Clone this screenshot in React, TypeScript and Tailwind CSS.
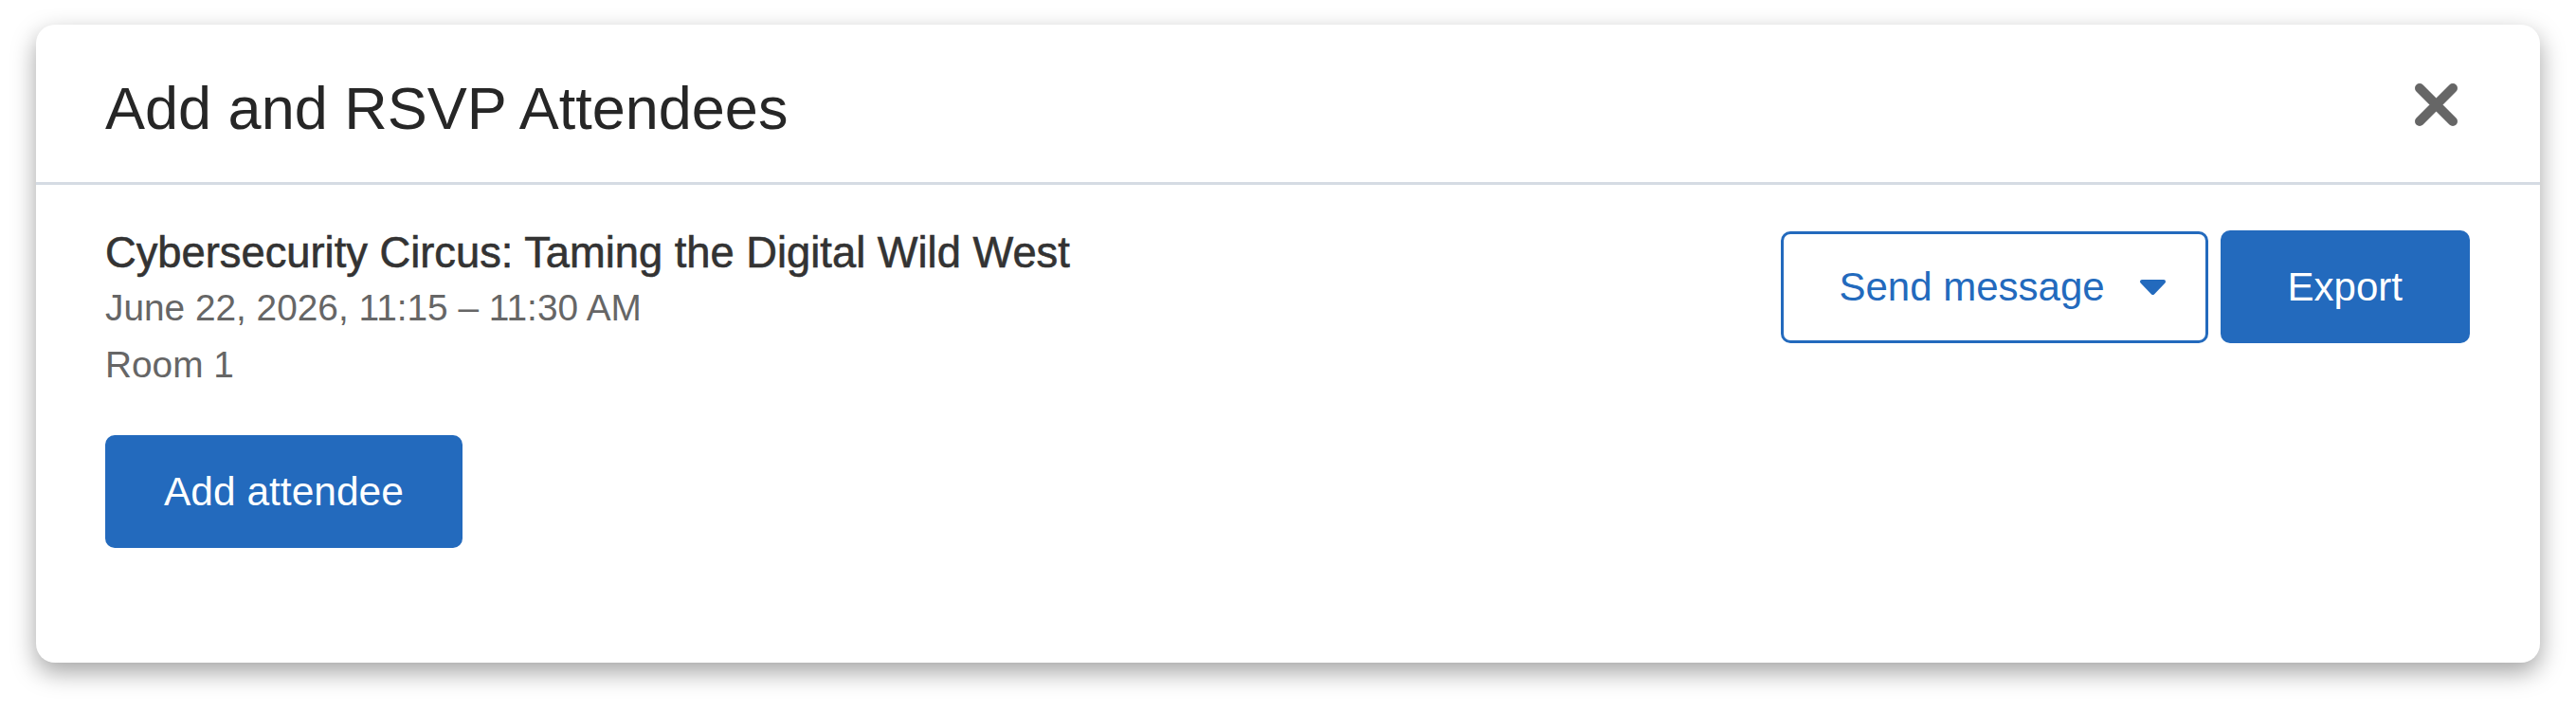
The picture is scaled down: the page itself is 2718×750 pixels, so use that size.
export default function App() {
  return (
    <div className="min-h-screen bg-white px-[38px] pt-[26px] font-['Liberation_Sans',Arial,sans-serif]">
      <div className="rounded-[20px] bg-white shadow-[0_10px_26px_rgba(0,0,0,0.36)]">
        {/* Header */}
        <header className="flex items-start justify-between border-b-[3px] border-[#d5dbe3] pb-[42px] pl-[73px] pr-[87px] pt-[52px]">
          <h1 className="text-[63px] leading-[72px] text-[#262626]">
            Add and RSVP Attendees
          </h1>
          <button className="mt-[10px]" aria-label="Close">
            <svg width="45" height="45" viewBox="0 0 45 45">
              <path
                d="M5 5 L40 40 M40 5 L5 40"
                stroke="#666666"
                strokeWidth="10"
                strokeLinecap="round"
              />
            </svg>
          </button>
        </header>

        {/* Body */}
        <div className="flex items-start justify-between pb-[121px] pl-[73px] pr-[74px] pt-[48px]">
          <div className="flex flex-col items-start">
            <h2 className="text-[45.3px] leading-[48px] text-[#333333] [-webkit-text-stroke:0.6px_#333333]">
              Cybersecurity Circus: Taming the Digital Wild West
            </h2>
            <p className="mt-[4px] text-[38.8px] leading-[60px] text-[#666666]">
              June 22, 2026, 11:15 – 11:30 AM
            </p>
            <p className="text-[38.8px] leading-[60px] text-[#666666]">Room 1</p>
            <button className="mt-[44px] flex h-[119px] items-center rounded-[10px] bg-[#236abd] px-[62px] text-[42.5px] text-white">
              Add attendee
            </button>
          </div>

          <div className="flex items-center gap-[13px]">
            <button className="flex h-[118px] items-center gap-[36px] rounded-[10px] border-[3px] border-[#236abd] bg-white pl-[58px] pr-[41px] text-[42px] text-[#236abd]">
              <span>Send message</span>
              <svg width="29" height="18" viewBox="0 0 29 18">
                <path
                  d="M3 3 L26 3 L14.5 15 Z"
                  fill="#236abd"
                  stroke="#236abd"
                  strokeWidth="4"
                  strokeLinejoin="round"
                />
              </svg>
            </button>
            <button className="flex h-[119px] items-center rounded-[10px] bg-[#236abd] px-[71px] text-[42px] text-white">
              Export
            </button>
          </div>
        </div>
      </div>
    </div>
  );
}
